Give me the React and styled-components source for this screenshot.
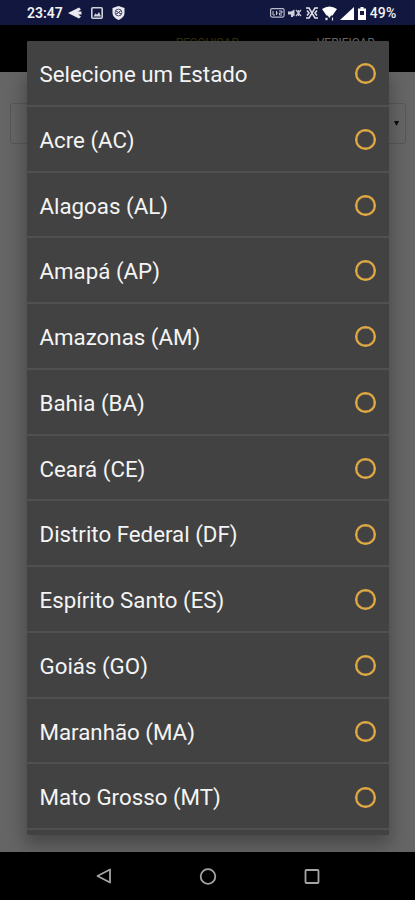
import React from "react";
import styled, { createGlobalStyle } from "styled-components";

const Global = createGlobalStyle`
  * { box-sizing: border-box; }
  body { margin: 0; background: #000; font-family: Roboto, "Liberation Sans", sans-serif; }
`;
const Screen = styled.div`
  position: relative;
  width: 415px;
  height: 900px;
  display: flex;
  flex-direction: column;
  overflow: hidden;
  background: #000;
`;
const StatusBar = styled.header`
  height: 25px;
  flex: none;
  display: flex;
  align-items: center;
  justify-content: space-between;
  padding: 1px 18.5px 0 27px;
  background: #12173f;
  color: #f2f2f5;
`;
const StatusGroup = styled.div`
  display: flex;
  align-items: center;
  gap: ${(p) => p.$gap}px;
`;
const Clock = styled.span`
  font-size: 14px;
  font-weight: 600;
  line-height: 24px;
  width: 41px;
  white-space: nowrap;
`;
const Battery = styled.span`
  font-size: 14px;
  font-weight: 500;
  line-height: 24px;
  letter-spacing: 0.2px;
`;
const TabBar = styled.nav`
  height: 47px;
  flex: none;
  display: flex;
  padding: 10.5px 0 0 138px;
  background: #000;
`;
const Tab = styled.span`
  width: 139px;
  text-align: center;
  font-size: 12px;
  line-height: 14px;
  color: ${(p) => (p.$active ? "#332d0c" : "#666")};
`;
const Page = styled.main`
  flex: 1;
  padding: 31px 9px 0 10px;
  background: #656565;
`;
const SelectBox = styled.div`
  height: 41px;
  display: flex;
  align-items: center;
  justify-content: flex-end;
  padding-right: 6px;
  border: 1px solid #575757;
  border-radius: 3px;
`;
const NavBar = styled.footer`
  height: 48px;
  flex: none;
  display: flex;
  align-items: center;
  justify-content: center;
  gap: 84px;
  background: #000;
`;
const Dialog = styled.ul`
  position: absolute;
  left: 27px;
  top: 41px;
  width: 361.5px;
  height: 794px;
  margin: 0;
  padding: 0;
  overflow: hidden;
  list-style: none;
  background: #424242;
  border-radius: 1px;
`;
const Shade = styled.div`
  position: absolute;
  left: 27px;
  top: 72px;
  width: 361px;
  height: 763px;
  box-shadow: 0 7px 16px 3px rgba(0, 0, 0, 0.28);
  clip-path: inset(0 -27px -17px -27px);
`;
const Option = styled.li`
  height: 65.77px;
  display: flex;
  align-items: center;
  justify-content: space-between;
  padding: 2.2px 12.5px 0 12.5px;
  border-bottom: 2px solid #505050;
  color: #f4f4f4;
  font-size: 22.3px;
  white-space: nowrap;
`;
const Radio = styled.span`
  width: 21px;
  height: 21px;
  margin-bottom: 0.6px;
  border: 2px solid #e3aa44;
  border-radius: 50%;
  box-shadow: inset 0 0 0 0.4px #e3aa44;
`;

const states = [
  "Selecione um Estado", "Acre (AC)", "Alagoas (AL)", "Amapá (AP)",
  "Amazonas (AM)", "Bahia (BA)", "Ceará (CE)", "Distrito Federal (DF)",
  "Espírito Santo (ES)", "Goiás (GO)", "Maranhão (MA)", "Mato Grosso (MT)",
];

const SendIcon = () => (
  <svg width="14" height="12" viewBox="0 0 14 12">
    <path d="M0 6 11 .5 13 2.500 10 4.500h3.500v3H10l3 2-2 2Z" fill="#e9e9ef" />
  </svg>
);
const ImageIcon = () => (
  <svg width="12" height="12" viewBox="0 0 12 12">
    <rect x=".8" y=".8" width="10.400" height="10.400" rx="1" fill="none" stroke="#d0d1dc" strokeWidth="1.600" />
    <path d="M2.500 9.500 4.500 6.300 6 7.700 8 5l2 4.500Z" fill="#d0d1dc" />
  </svg>
);
const ShieldIcon = () => (
  <svg width="13" height="14" viewBox="0 0 13 14">
    <path d="M6.500 0 12.500 2v5c0 3-2.500 5.500-6 7C3 12.500.500 10 .500 7V2Z" fill="#e9e9ef" />
    <circle cx="6.500" cy="6.500" r="3.400" fill="none" stroke="#4a4e70" />
    <path d="M4 5 9 8M4 8l2-1M7 6l2-1.500" stroke="#30345a" strokeWidth="1" />
  </svg>
);
const VolteIcon = () => (
  <svg width="15" height="10" viewBox="0 0 15 10">
    <rect x=".6" y=".6" width="13.500" height="8.500" rx="1.500" fill="none" stroke="#b9bbcc" strokeWidth="1.200" />
    <path d="M3 3v4h2M6.500 3v4M6.500 5H8M9 3h3v2H9.500v2H12" fill="none" stroke="#c9cad8" />
  </svg>
);
const MutedIcon = () => (
  <svg width="14" height="10" viewBox="0 0 14 10">
    <path d="M0 3.500h3L6.500 1.500v7L5 7.500V9H3V6.500H0Z" fill="#d0d1dc" />
    <path d="M8 2l5 6M13 2 8 8M10.500 2v6" fill="none" stroke="#c4c6d4" strokeWidth="1.200" />
  </svg>
);
const NfcIcon = () => (
  <svg width="12" height="12" viewBox="0 0 12 12">
    <path d="M0 1h3l6 10h3M12 1H9L3 11H0M1 3.500 3 6 1 8.500M11 3.500 9 6l2 2.500" fill="none" stroke="#e3e3ea" strokeWidth="1.500" />
  </svg>
);
const WifiIcon = () => (
  <svg width="15" height="15" viewBox="0 0 15 15">
    <path d="M0 3Q7.500-2 15 3L10.500 9.500H9L7.500 12 5.500 9.500H4.500Z" fill="#fff" />
    <path d="M3.500 12l2 2m0-2-2 2M10.500 11.500v3" stroke="#e3e3ea" strokeWidth="1.200" />
  </svg>
);
const SignalIcon = () => (
  <svg width="14" height="13" viewBox="0 0 14 13"><path d="M14 0v13H0Z" fill="#fff" /></svg>
);
const BatteryIcon = () => (
  <svg width="8" height="13" viewBox="0 0 8 13">
    <path d="M2.500 0h3v1.500H8V13H0V1.500h2.500Z" fill="#fff" />
    <path d="M2 4h4v4H2Z" fill="#151a45" />
  </svg>
);

export default function App() {
  return (
    <>
      <Global />
      <Screen>
        <StatusBar>
          <StatusGroup $gap={0}>
            <Clock>23:47</Clock>
            <StatusGroup $gap={9}><SendIcon /><ImageIcon /><ShieldIcon /></StatusGroup>
          </StatusGroup>
          <StatusGroup $gap={3.7}>
            <VolteIcon /><MutedIcon /><NfcIcon /><WifiIcon /><SignalIcon /><BatteryIcon />
            <Battery>49%</Battery>
          </StatusGroup>
        </StatusBar>
        <TabBar><Tab $active>PESQUISAR</Tab><Tab>VERIFICAR</Tab></TabBar>
        <Page>
          <SelectBox>
            <svg width="5" height="5" viewBox="0 0 5 5"><path d="M0 0h5L2.500 5Z" fill="#080808" /></svg>
          </SelectBox>
        </Page>
        <NavBar>
          <svg width="20" height="20" viewBox="0 0 20 20"><path d="M16 3.500v13L3.500 10Z" fill="none" stroke="#a5a5a5" strokeWidth="1.800" strokeLinejoin="round" /></svg>
          <svg width="20" height="20" viewBox="0 0 20 20"><circle cx="10" cy="10.500" r="7.300" fill="none" stroke="#a5a5a5" strokeWidth="1.800" /></svg>
          <svg width="20" height="20" viewBox="0 0 20 20"><rect x="3.500" y="4" width="13" height="13" rx="1" fill="none" stroke="#a5a5a5" strokeWidth="1.800" /></svg>
        </NavBar>
        <Shade />
        <Dialog>
          {states.map((name) => (
            <Option key={name}>{name}<Radio /></Option>
          ))}
        </Dialog>
      </Screen>
    </>
  );
}
